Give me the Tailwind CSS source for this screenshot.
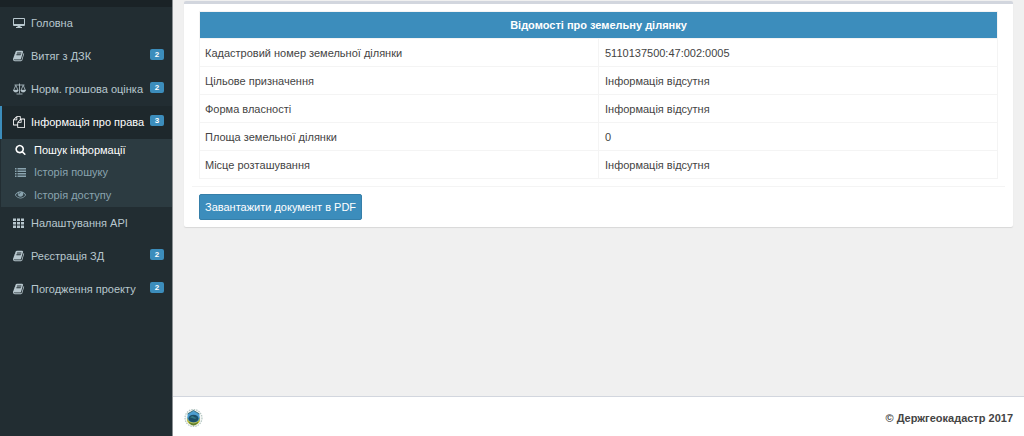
<!DOCTYPE html>
<html lang="uk">
<head>
<meta charset="utf-8">
<meta name="viewport" content="width=device-width, initial-scale=1">
<title>Відомості про земельну ділянку</title>
<script src="https://cdn.jsdelivr.net/npm/@tailwindcss/browser@4"></script>
</head>
<body class="flex min-h-screen bg-[#f0f0f0] font-['Liberation_Sans',Arial,sans-serif] text-[11px] leading-4 text-[#444]">
<svg class="hidden" aria-hidden="true">
  <symbol id="book" viewBox="0 0 1792 1792"><path d="M1639 478q40 57 18 129l-275 906q-19 64-76.500 107.500t-122.500 43.500h-923q-77 0-148.500-53.500t-99.500-131.500q-24-67-2-127 0-4 3-27t4-37q1-8-3-21.500t-3-19.500q2-11 8-21t16.500-23.500 16.500-23.500q23-38 45-91.500t30-91.500q3-10 .5-30t-.5-28q3-11 17-28t17-23q21-36 42-92t25-90q1-9-2.500-32t.5-28q4-13 22-30.500t22-22.500q19-26 42.500-84.500t27.500-96.500q1-8-3-25.500t-2-26.500q2-8 9-18t18-23 17-21q8-12 16.500-30.500t15-35 16-36 19.500-32 26.500-23.500 36-11.500 47.500 5.500l-1 3q38-9 51-9h761q74 0 114 56t18 130l-274 906q-36 119-71.500 153.500t-128.500 34.500h-869q-27 0-38 15-11 16-1 43 24 70 144 70h923q29 0 56-15.500t35-41.500l300-987q7-22 5-57 38 15 59 43zm-1064 2q-4 13 2 22.500t20 9.500h608q13 0 25.500-9.500t16.500-22.500l21-64q4-13-2-22.500t-20-9.500h-608q-13 0-25.500 9.500t-16.500 22.500zm-83 256q-4 13 2 22.500t20 9.500h608q13 0 25.500-9.500t16.500-22.500l21-64q4-13-2-22.500t-20-9.500h-608q-13 0-25.500 9.500t-16.500 22.500z"/></symbol>
</svg>

<aside class="w-[173px] shrink-0 border-r border-[#8b9093] bg-[#222d32] text-[#b8c7ce]">
  <div class="h-[7px] bg-[#1a2226]"></div>
  <nav aria-label="Головне меню">
    <ul>
      <li><a href="#" class="flex h-[33px] items-center border-l-2 border-transparent pr-2 pb-0.5 pl-[11px]">
        <svg class="mr-1.5 size-3 shrink-0" viewBox="0 0 12 12" fill="currentColor"><path fill-rule="evenodd" d="M1 1h10q1 0 1 1v6q0 1-1 1H7.500v1H9v1H3v-1h1.500V9H1q-1 0-1-1V2q0-1 1-1zm0 1v5h10V2z"/></svg>
        <span class="grow">Головна</span></a></li>
      <li><a href="#" class="flex h-[33px] items-center border-l-2 border-transparent pr-2 pb-0.5 pl-[11px]">
        <svg class="mr-1.5 size-3 shrink-0" fill="currentColor"><use href="#book"/></svg>
        <span class="grow">Витяг з ДЗК</span><span class="mb-0.5 h-[11px] w-3.5 rounded-xs bg-[#3c8dbc] text-center text-[8px] leading-[11px] font-bold text-white">2</span></a></li>
      <li><a href="#" class="flex h-[33px] items-center border-l-2 border-transparent pr-2 pb-0.5 pl-[11px]">
        <svg class="-mr-px h-3 w-[13px] shrink-0" viewBox="0 0 13 12" fill="none" stroke="currentColor" stroke-width=".8"><path d="M6.500 .5v10M3.500 11h6M1.500 2h10M2.800 2.300.6 7.300h4.400zM10.200 2.300 8 7.300h4.400z"/><path fill="currentColor" d="M.5 7.500h4.600q-.4 1.500-2.300 1.500T.5 7.500zM7.900 7.500h4.600q-.4 1.500-2.300 1.500T7.900 7.500z"/></svg>
        <span class="ml-1.5 grow whitespace-nowrap">Норм. грошова оцінка</span><span class="mb-0.5 h-[11px] w-3.5 rounded-xs bg-[#3c8dbc] text-center text-[8px] leading-[11px] font-bold text-white">2</span></a></li>
      <li><a href="#" aria-current="true" class="flex h-[33px] items-center border-l-2 border-[#3c8dbc] bg-[#1e282c] pr-2 pb-0.5 pl-[11px] text-white">
        <svg class="mr-1.5 size-3 shrink-0" viewBox="0 0 1792 1792" fill="currentColor"><path d="M1696 384q40 0 68 28t28 68v1216q0 40-28 68t-68 28h-960q-40 0-68-28t-28-68v-288h-544q-40 0-68-28t-28-68v-672q0-40 20-88t48-76l408-408q28-28 76-48t88-20h416q40 0 68 28t28 68v328q68-40 128-40h416zm-544 213l-299 299h299v-299zm-640-384l-299 299h299v-299zm196 647l316-316v-416h-384v416q0 40-28 68t-68 28h-416v640h512v-256q0-40 20-88t48-76zm956 804v-1152h-384v416q0 40-28 68t-68 28h-416v640h896z"/></svg>
        <span class="grow whitespace-nowrap">Інформація про права</span><span class="mb-0.5 h-[11px] w-3.5 rounded-xs bg-[#3c8dbc] text-center text-[8px] leading-[11px] font-bold text-white">3</span></a>
        <ul class="ml-px bg-[#2c3b41] text-[#8aa4af]">
          <li><a href="#" class="flex h-[23px] items-center pb-0.5 pl-3.5 text-white">
            <svg class="mr-2 size-[11px] shrink-0" viewBox="0 0 1792 1792" fill="currentColor"><path d="M1216 832q0-185-131.500-316.500t-316.500-131.500-316.500 131.500-131.500 316.500 131.500 316.500 316.500 131.500 316.500-131.500 131.500-316.500zm512 832q0 52-38 90t-90 38q-54 0-90-38l-343-342q-179 124-399 124-143 0-273.500-55.500t-225-150-150-225-55.500-273.500 55.500-273.500 150-225 225-150 273.500-55.500 273.500 55.500 225 150 150 225 55.500 273.500q0 220-124 399l343 343q37 37 37 90z"/></svg>Пошук інформації</a></li>
          <li><a href="#" class="flex h-[22px] items-center pb-0.5 pl-3.5">
            <svg class="mr-2 size-[11px] shrink-0" viewBox="0 0 11 11" fill="currentColor"><path d="M0 1h1.500v1.500H0zM2.500 1H11v1.500H2.500zM0 3.500h1.500V5H0zM2.500 3.500H11V5H2.500zM0 6h1.500v1.500H0zM2.500 6H11v1.500H2.500zM0 8.500h1.500V10H0zM2.500 8.500H11V10H2.500z"/></svg>Історія пошуку</a></li>
          <li><a href="#" class="flex h-[23px] items-center pb-0.5 pl-3.5">
            <svg class="mr-2 size-[11px] shrink-0" viewBox="0 0 1792 1792" fill="currentColor"><path d="M1664 960q-152-236-381-353 61 104 61 225 0 185-131.500 316.500t-316.500 131.500-316.500-131.500-131.500-316.500q0-121 61-225-229 117-381 353 133 205 333.500 326.500t434.500 121.500 434.500-121.500 333.500-326.500zm-720-384q0-20-14-34t-34-14q-125 0-214.500 89.500t-89.500 214.500q0 20 14 34t34 14 34-14 14-34q0-86 61-147t147-61q20 0 34-14t14-34zm848 384q0 34-20 69-140 230-376.500 368.500t-499.500 138.500-499.500-139-376.500-368q-20-35-20-69t20-69q140-229 376.500-368t499.500-139 499.500 139 376.500 368q20 35 20 69z"/></svg>Історія доступу</a></li>
        </ul></li>
      <li><a href="#" class="flex h-[33px] items-center border-l-2 border-transparent pr-2 pb-0.5 pl-[11px]">
        <svg class="mr-1.5 size-3 shrink-0" viewBox="0 0 12 12" fill="currentColor"><path d="M0 1.500h3v2.500H0zM4 1.500h3v2.500H4zM8 1.500h3v2.500H8zM0 5h3v2.500H0zM4 5h3v2.500H4zM8 5h3v2.500H8zM0 8.500h3V11H0zM4 8.500h3V11H4zM8 8.500h3V11H8z"/></svg>
        <span class="grow">Налаштування API</span></a></li>
      <li><a href="#" class="flex h-[33px] items-center border-l-2 border-transparent pr-2 pb-0.5 pl-[11px]">
        <svg class="mr-1.5 size-3 shrink-0" fill="currentColor"><use href="#book"/></svg>
        <span class="grow">Реєстрація ЗД</span><span class="mb-0.5 h-[11px] w-3.5 rounded-xs bg-[#3c8dbc] text-center text-[8px] leading-[11px] font-bold text-white">2</span></a></li>
      <li><a href="#" class="flex h-[33px] items-center border-l-2 border-transparent pr-2 pb-0.5 pl-[11px]">
        <svg class="mr-1.5 size-3 shrink-0" fill="currentColor"><use href="#book"/></svg>
        <span class="grow">Погодження проекту</span><span class="mb-0.5 h-[11px] w-3.5 rounded-xs bg-[#3c8dbc] text-center text-[8px] leading-[11px] font-bold text-white">2</span></a></li>
    </ul>
  </nav>
</aside>

<div class="flex min-w-0 grow flex-col">
  <main class="grow px-[11px] pt-px">
    <section class="rounded-xs border-t-[3px] border-[#d2d6de] bg-white px-2 pt-[7px] pb-[7px] shadow-[0_1px_1px_rgba(0,0,0,0.1)]">
      <div class="px-[7px] pb-[7px]">
        <table class="w-full table-fixed border-collapse border border-[#f4f4f4] text-left">
          <thead>
            <tr class="h-[27px] bg-[#3c8dbc] text-white"><th colspan="2" scope="colgroup" class="text-center font-bold">Відомості про земельну ділянку</th></tr>
          </thead>
          <tbody>
            <tr class="h-7"><th scope="row" class="border border-[#f4f4f4] px-[5px] font-normal">Кадастровий номер земельної ділянки</th><td class="border border-[#f4f4f4] px-1.5">5110137500:47:002:0005</td></tr>
            <tr class="h-7"><th scope="row" class="border border-[#f4f4f4] px-[5px] font-normal">Цільове призначення</th><td class="border border-[#f4f4f4] px-1.5">Інформація відсутня</td></tr>
            <tr class="h-7"><th scope="row" class="border border-[#f4f4f4] px-[5px] font-normal">Форма власності</th><td class="border border-[#f4f4f4] px-1.5">Інформація відсутня</td></tr>
            <tr class="h-7"><th scope="row" class="border border-[#f4f4f4] px-[5px] font-normal">Площа земельної ділянки</th><td class="border border-[#f4f4f4] px-1.5">0</td></tr>
            <tr class="h-7"><th scope="row" class="border border-[#f4f4f4] px-[5px] font-normal">Місце розташування</th><td class="border border-[#f4f4f4] px-1.5">Інформація відсутня</td></tr>
          </tbody>
        </table>
      </div>
      <div class="border-t border-[#f4f4f4] px-[7px] pt-[7px]">
        <button type="button" class="block h-[26px] rounded-xs border border-[#367fa9] bg-[#3c8dbc] px-[5px] text-white">Завантажити документ в PDF</button>
      </div>
    </section>
  </main>
  <footer class="flex h-10 items-center justify-between border-t border-[#d2d6de] bg-white px-[11px] pt-0.5 font-bold">
    <svg class="size-5" viewBox="0 0 20 20" role="img" aria-label="Держгеокадастр">
      <circle cx="9.500" cy="10" r="8.500" fill="#f4f7f5" stroke="#b4c6c2" stroke-width="1.200" stroke-dasharray="1.500 1"/>
      <path d="M9.500 2.500 15 5.500l1 5q0 5-6.500 6.500Q3 15.500 3 10.500l1-5z" fill="#4c9fd2"/>
      <path d="M3 9.500q1 5 6.500 5t6.500-5v3q-1 4-6.500 5Q4 16.500 3 12.500z" fill="#cfc535"/>
      <path d="M4.500 13.500q5 4 10 0-1 3-5 4-4-1-5-4z" fill="#5d7c34"/>
      <ellipse cx="9.500" cy="10.500" rx="5" ry="3.800" fill="#1c4f68"/>
      <path d="M6 9.500q2-2.500 3.500-1t3.500 1q-1 2-3.500 1t-3.500-1z" fill="#347a86"/>
      <path d="M3.500 6 9.500 2.500 15.500 6" fill="none" stroke="#3e737c"/>
    </svg>
    <p>© Держгеокадастр 2017</p>
  </footer>
</div>
</body>
</html>
